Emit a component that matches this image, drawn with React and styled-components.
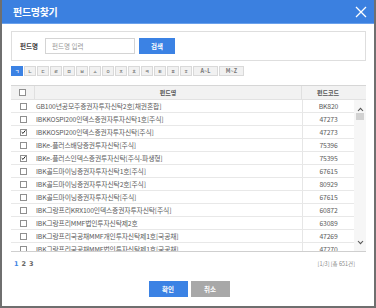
import React from 'react'
import styled, { createGlobalStyle } from 'styled-components'

const GlobalStyle = createGlobalStyle`
  html, body {
    margin: 0;
    padding: 0;
    background: #fff;
  }
  body {
    font-family: "Noto Sans CJK KR", "Noto Sans", sans-serif;
  }
  * { box-sizing: border-box; }
`

const Dialog = styled.div`
  width: 376px;
  height: 308px;
  border: 2px solid #6f6f6f;
  border-top: 0;
  background: #fff;
  display: flex;
  flex-direction: column;
`

const TitleBar = styled.div`
  height: 24px;
  background: #3b80e0;
  display: flex;
  align-items: center;
  justify-content: space-between;
  padding: 0 7px 0 11px;
  border-bottom: 1px solid #6aa1ec;
`

const Title = styled.h1`
  margin: 0;
  font-size: 10px;
  font-weight: 700;
  color: #fff;
  letter-spacing: -0.3px;
`

const CloseButton = styled.button`
  border: 0;
  background: none;
  padding: 0;
  width: 13px;
  height: 13px;
  display: flex;
  align-items: center;
  justify-content: center;
  cursor: pointer;
`

const Content = styled.div`
  padding: 7px 8px 0 9px;
  display: flex;
  flex-direction: column;
`

const SearchBox = styled.div`
  height: 30px;
  border: 1px solid #dedede;
  display: flex;
  align-items: center;
  padding-left: 8px;
  gap: 4px;
`

const Label = styled.label`
  font-size: 6.5px;
  font-weight: 700;
  color: #444;
  width: 21px;
`

const Input = styled.input`
  width: 90px;
  height: 16px;
  border: 1px solid #d4d4d4;
  padding: 0 6px;
  font-family: inherit;
  font-size: 6.5px;
  color: #555;
  outline: none;
  &::placeholder { color: #999; }
`

const BlueButton = styled.button`
  width: ${p => p.$w}px;
  height: ${p => p.$h}px;
  border: 0;
  background: ${p => (p.$gray ? '#a8a8a8' : '#3b82e4')};
  color: #fff;
  font-family: inherit;
  font-size: 6.5px;
  font-weight: 700;
  padding: 0;
  cursor: pointer;
`

const IndexRow = styled.div`
  display: flex;
  gap: 1px;
  margin-top: 5px;
  height: 10px;
`

const IndexKey = styled.button`
  width: ${p => p.$w}px;
  height: 10px;
  padding: 0;
  border: 1px solid ${p => (p.$active ? '#3b82e4' : '#d9d9d9')};
  background: ${p => (p.$active ? '#3b82e4' : '#f1f1f1')};
  color: ${p => (p.$active ? '#fff' : '#777')};
  font-family: inherit;
  font-size: ${p => (p.$w > 12 ? '5.5px' : '4.5px')};
  font-weight: 700;
  line-height: 8px;
  cursor: pointer;
`

const Table = styled.div`
  margin-top: 9px;
  border-top: 1px solid #d6d6d6;
  border-bottom: 1px solid #cfcfcf;
`

const HeadRow = styled.div`
  display: grid;
  grid-template-columns: 24px 1fr 52px 12px;
  height: 14px;
  background: #f2f2f2;
  border-bottom: 1px solid #e2e2e2;
`

const HeadCell = styled.div`
  display: flex;
  align-items: center;
  justify-content: center;
  font-size: 6px;
  font-weight: 700;
  color: #555;
  border-right: ${p => (p.$line ? '1px solid #e0e0e0' : '0')};
`

const BodyWrap = styled.div`
  display: flex;
  height: 151px;
`

const Rows = styled.div`
  flex: 1;
  overflow: hidden;
`

const Row = styled.div`
  display: grid;
  grid-template-columns: 24px 1fr 52px;
  height: 13px;
  border-bottom: 1px solid #e8e8e8;
`

const Cell = styled.div`
  display: flex;
  align-items: center;
  justify-content: ${p => p.$align || 'flex-start'};
  font-size: ${p => p.$size || '6.8px'};
  color: #5a5a5a;
  white-space: nowrap;
  overflow: hidden;
  padding-left: ${p => p.$pad || 0}px;
  border-left: ${p => (p.$line ? '1px solid #e6e6e6' : '0')};
  letter-spacing: -0.15px;
`

const Box = styled.span`
  width: 7px;
  height: 7px;
  border: 1px solid #8f8f8f;
  background: #fff;
  display: flex;
  align-items: center;
  justify-content: center;
`

const ScrollTrack = styled.div`
  width: 12px;
  background: #f6f6f6;
  display: flex;
  flex-direction: column;
  align-items: center;
  padding: 7px 0 6px;
`

const Thumb = styled.div`
  width: 8px;
  height: 7px;
  background: #d2d2d2;
  margin-top: 1px;
`

const Spacer = styled.div`
  flex: 1;
`

const Pager = styled.div`
  display: flex;
  align-items: center;
  justify-content: space-between;
  margin-top: 7px;
  padding: 0 3px 0 3px;
  height: 10px;
`

const Pages = styled.div`
  display: flex;
  gap: 3px;
`

const PageNum = styled.span`
  font-family: "DejaVu Sans", sans-serif;
  font-size: 6.5px;
  font-weight: 700;
  color: ${p => (p.$active ? '#3b82e4' : '#666')};
`

const Total = styled.span`
  font-size: 5.5px;
  color: #888;
  padding-right: 8px;
`

const Actions = styled.div`
  display: flex;
  justify-content: center;
  gap: 3px;
  margin-top: 12px;
  padding-left: 1px;
`

const Check = ({ on }) => (
  <Box>
    {on && (
      <svg width="6" height="6" viewBox="0 0 6 6">
        <path d="M0.8 3.1 L2.4 4.7 L5.3 1" fill="none" stroke="#222" strokeWidth="1.2" />
      </svg>
    )}
  </Box>
)

const Chevron = ({ up }) => (
  <svg width="7" height="5" viewBox="0 0 7 5">
    <path d={up ? 'M1 4 L3.5 1.3 L6 4' : 'M1 1 L3.5 3.7 L6 1'} fill="none" stroke="#555" strokeWidth="1.1" />
  </svg>
)

const keys = ['ㄱ', 'ㄴ', 'ㄷ', 'ㄹ', 'ㅁ', 'ㅂ', 'ㅅ', 'ㅇ', 'ㅈ', 'ㅊ', 'ㅋ', 'ㅌ', 'ㅍ', 'ㅎ']

const funds = [
  ['GB100년공모주증권자투자신탁2호[채권혼합]', 'BK820', false],
  ['IBKKOSPI200인덱스증권자투자신탁1호[주식]', '47273', false],
  ['IBKKOSPI200인덱스증권자투자신탁[주식]', '47273', true],
  ['IBKe-플러스배당증권투자신탁[주식]', '75396', false],
  ['IBKe-플러스인덱스증권투자신탁[주식-파생형]', '75395', true],
  ['IBK골드마이닝증권자투자신탁1호[주식]', '67615', false],
  ['IBK골드마이닝증권자투자신탁2호[주식]', '80929', false],
  ['IBK골드마이닝증권자투자신탁[주식]', '67615', false],
  ['IBK그랑프리KRX100인덱스증권자투자신탁[주식]', '60872', false],
  ['IBK그랑프리MMF법인투자신탁제2호', '63089', false],
  ['IBK그랑프리국공채MMF개인투자신탁제1호[국공채]', '47269', false],
  ['IBK그랑프리국공채MMF법인투자신탁제1호[국공채]', '47270', false],
]

export default function App() {
  return (
    <>
      <GlobalStyle />
      <Dialog>
        <TitleBar>
          <Title>펀드명찾기</Title>
          <CloseButton aria-label="닫기">
            <svg width="12" height="12" viewBox="0 0 12 12">
              <path d="M1 1 L11 11 M11 1 L1 11" stroke="#fff" strokeWidth="1.3" />
            </svg>
          </CloseButton>
        </TitleBar>
        <Content>
          <SearchBox>
            <Label>펀드명</Label>
            <Input placeholder="펀드명 입력" />
            <BlueButton $w={36} $h={16}>검색</BlueButton>
          </SearchBox>

          <IndexRow>
            {keys.map((k, i) => (
              <IndexKey key={k} $w={12} $active={i === 0}>{k}</IndexKey>
            ))}
            <IndexKey $w={25}>A~L</IndexKey>
            <IndexKey $w={25}>M~Z</IndexKey>
          </IndexRow>

          <Table>
            <HeadRow>
              <HeadCell $line><Check /></HeadCell>
              <HeadCell $line>펀드명</HeadCell>
              <HeadCell>펀드코드</HeadCell>
              <HeadCell />
            </HeadRow>
            <BodyWrap>
              <Rows>
                {funds.map(([name, code, on], i) => (
                  <Row key={i}>
                    <Cell $align="center"><Check on={on} /></Cell>
                    <Cell $pad={1}>{name}</Cell>
                    <Cell $align="center" $line $size="6.8px">{code}</Cell>
                  </Row>
                ))}
              </Rows>
              <ScrollTrack>
                <Chevron up />
                <Thumb />
                <Spacer />
                <Chevron />
              </ScrollTrack>
            </BodyWrap>
          </Table>

          <Pager>
            <Pages>
              <PageNum $active>1</PageNum>
              <PageNum>2</PageNum>
              <PageNum>3</PageNum>
            </Pages>
            <Total>[1/3] [총 651건]</Total>
          </Pager>

          <Actions>
            <BlueButton $w={39} $h={16}>확인</BlueButton>
            <BlueButton $w={39} $h={16} $gray>취소</BlueButton>
          </Actions>
        </Content>
      </Dialog>
    </>
  )
}
